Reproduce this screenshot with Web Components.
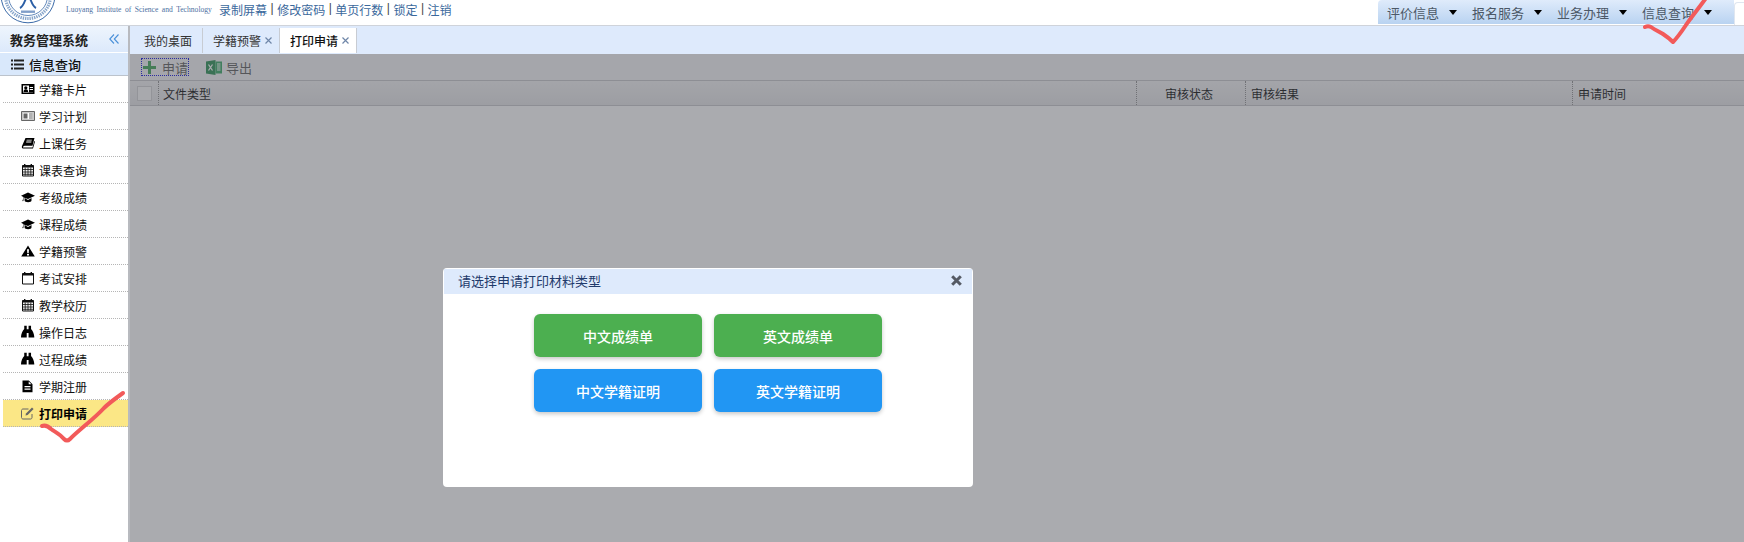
<!DOCTYPE html>
<html lang="zh">
<head>
<meta charset="utf-8">
<title>教务管理系统</title>
<style>
  html, body { margin: 0; height: 100%; overflow: hidden; background: #fff; }
  body { font: 12px "Liberation Sans", "Noto Sans CJK SC", sans-serif; color: #111; }
</style>
</head>
<body>
<edu-app>
  <top-bar slot="top">
    <top-link slot="links">录制屏幕</top-link>
    <top-link slot="links">修改密码</top-link>
    <top-link slot="links">单页行数</top-link>
    <top-link slot="links">锁定</top-link>
    <top-link slot="links">注销</top-link>
    <menu-tab slot="menu">评价信息</menu-tab>
    <menu-tab slot="menu">报名服务</menu-tab>
    <menu-tab slot="menu">业务办理</menu-tab>
    <menu-tab slot="menu">信息查询</menu-tab>
  </top-bar>
  <side-nav slot="side">
    <nav-item icon="card">学籍卡片</nav-item>
    <nav-item icon="news">学习计划</nav-item>
    <nav-item icon="book">上课任务</nav-item>
    <nav-item icon="grid">课表查询</nav-item>
    <nav-item icon="cap">考级成绩</nav-item>
    <nav-item icon="cap">课程成绩</nav-item>
    <nav-item icon="warn">学籍预警</nav-item>
    <nav-item icon="cal">考试安排</nav-item>
    <nav-item icon="grid">教学校历</nav-item>
    <nav-item icon="bino">操作日志</nav-item>
    <nav-item icon="bino">过程成绩</nav-item>
    <nav-item icon="file">学期注册</nav-item>
    <nav-item icon="edit" active>打印申请</nav-item>
  </side-nav>
  <tab-bar slot="tabs">
    <tab-item>我的桌面</tab-item>
    <tab-item closable>学籍预警</tab-item>
    <tab-item closable active>打印申请</tab-item>
  </tab-bar>
  <apply-panel slot="panel"></apply-panel>
  <modal-dialog slot="modal" heading="请选择申请打印材料类型">
    <action-button color="#4caf50">中文成绩单</action-button>
    <action-button color="#4caf50">英文成绩单</action-button>
    <action-button color="#2196f3">中文学籍证明</action-button>
    <action-button color="#2196f3">英文学籍证明</action-button>
  </modal-dialog>
</edu-app>

<script>
(() => {
  const define = (name, html, extra = {}) => {
    customElements.define(name, class extends HTMLElement {
      constructor() {
        super();
        this.attachShadow({ mode: 'open' });
        this.shadowRoot.innerHTML = html;
      }
      connectedCallback() {
        if (extra.ready) extra.ready.call(this);
      }
    });
  };

  const GRID_LINES = '<path fill="none" stroke="#111" stroke-width=".8" d="M1.400 6.500h11.200M1.400 9h11.200M1.400 11.300h11.200M4.200 4.500v8M7 4.500v8M9.800 4.500v8"/>';
  const ICONS = {
    card: '<path fill="#000" d="M.5 2h13v10H.5z"/><path fill="#fff" d="M2 3.500h10v7H2z"/><circle cx="4.800" cy="5.800" r="1.600" fill="#000"/><path fill="#000" d="M2.500 10c0-2 1-2.700 2.300-2.700S7.200 8 7.200 10zM8 3h4.500v7.500H8z"/><path fill="#fff" d="M8.700 5H12v1H8.700zM8.700 7H12v1H8.700z"/>',
    news: '<path fill="#c9c9c9" stroke="#666" d="M.5 2.500h13v9H.5z"/><path fill="#fff" d="M2 4h10v6H2z"/><path fill="#666" d="M2.500 4.500h4v5h-4zM8 4.500h3.800v1H8zM8 6.500h3.800v1H8zM8 8.500h3.800v1H8z"/>',
    book: '<path fill="#000" d="M4.500 2h9l-2 7.800H3.500L2.200 10.400c-.5 1 .1 1.100.9 1.100h8.400l1.800-6.500.7.400-2 7.100H2.600C1.300 12.500.5 11.600.9 10.200z"/><path fill="#fff" d="M5.700 3.800l-.2.800h5.200l.2-.8zM5.300 5.600l-.2.800h5.200l.2-.8z"/>',
    grid: '<path fill="#111" d="M3 1h1.400v2H3zM9.600 1H11v2H9.600z"/><path fill="#f4f4f4" stroke="#111" d="M1.500 2.500h11v10.500h-11z"/><path fill="#111" d="M1.500 2.500h11v2h-11z"/>' + GRID_LINES,
    cal: '<path fill="#111" d="M3 1h1.400v2H3zM9.600 1H11v2H9.600z"/><path fill="#fff" stroke="#111" d="M1.500 2.500h11v10.500h-11z"/><path fill="#111" d="M1.500 2.500h11v2h-11z"/>',
    cap: '<path fill="#000" d="M7 2.500L0 5.800l2.400 1.100-.5 2.900-.5.300.3 1.200.7-.2.200-3.700L7 9l7-3.200zM3.600 8.100v2.500c0 1 1.600 1.600 3.500 1.600s3.400-.6 3.400-1.600V8.100L7 9.900z"/>',
    warn: '<path fill="#000" fill-rule="evenodd" d="M7 1.500l6.800 11H.2zM6 5.200l.3 4h1.400l.3-4zm0 4.800v1.500h2V10z"/>',
    bino: '<g transform="translate(0 -.6) scale(1.080)"><path fill="#000" d="M3 1.200h2.300v11H.3c-.3 0-.3-.4-.3-.6C.1 8.800 1.400 6 3 4.300zM7 1.200h2.300v3.100c1.600 1.700 2.900 4.500 3 7.300 0 .2 0 .6-.3.600H7zM5.300 4.500h1.700v3.500H5.300z"/></g>',
    file: '<path fill="#000" fill-rule="evenodd" d="M1.500 1.500h6.300l3.700 3.700v8h-10zM3.500 7v1.200h6V7zM3.500 9.500v1.200h6V9.500zM7.700 2.600V5.300h2.700z"/>',
    edit: '<path fill="none" stroke="#666" d="M11 8v3.500c0 .8-.6 1.500-1.400 1.500H2c-.8 0-1.500-.7-1.500-1.500V4.500C.5 3.700 1.200 3 2 3h5.500"/><path fill="#666" d="M5 7.500L11 1.500l1.600 1.600-6 6-2.100.5z"/>'
  };

  define('edu-app', `
    <style>
      :host { display: flex; flex-direction: column; width: 1744px; height: 542px; position: relative; overflow: hidden; }
      .body { flex: 1; display: flex; min-height: 0; }
      .main { flex: 1; display: flex; flex-direction: column; position: relative; min-width: 0; }
      .shade { position: absolute; left: 0; right: 0; top: 28px; bottom: 0; background: rgba(85, 87, 95, .5); }
      .marks { position: absolute; left: 0; top: 0; width: 1744px; height: 542px; pointer-events: none; }
      .marks path { fill: none; stroke: #f25a5a; stroke-width: 4; stroke-linecap: round; stroke-linejoin: round; }
    </style>
    <slot name="top"></slot>
    <div class="body">
      <slot name="side"></slot>
      <div class="main">
        <slot name="tabs"></slot>
        <slot name="panel"></slot>
        <div class="shade"></div>
        <slot name="modal"></slot>
      </div>
    </div>
    <svg class="marks" viewBox="0 0 1744 542">
      <path d="M42 426c3-1 6 0 9 3 4 3 9 5 13 10 2 2 4 2 6 0 10-10 24-20 34-31 5-5 12-10 19-15"/>
      <path d="M1645 27c2-1 4-1 6 0 4 3 9 5 12 7 3 2 7 5 10 8 5-5 9-11 13-17 6-9 13-17 20-27"/>
    </svg>
  `);

  define('top-bar', `
    <style>
      :host { display: flex; height: 26px; box-sizing: border-box; flex: none; border-bottom: 1px solid #cfd3da; background: #fff; overflow: hidden; }
      svg { flex: none; width: 58px; height: 25px; }
      .school { flex: none; margin: 4px 0 0 8px; width: 153px; font: 7.600px/12px "Liberation Serif", serif; word-spacing: 1.600px; color: #4d6f9f; white-space: nowrap; }
      .links { flex: none; display: flex; height: 18px; align-items: center; white-space: nowrap; }
      .gap { flex: 1; }
      .menu { flex: none; display: flex; width: 356px; height: 24px; box-sizing: border-box; border-radius: 4px 0 0 0; background: linear-gradient(#dfebfb, #b9d3f1); }
      .end { flex: none; width: 10px; height: 23px; margin-top: 2px; background: #fff; border: 1px solid #dfe6f0; border-bottom: 0; border-right: 0; border-radius: 4px 0 0 0; box-sizing: border-box; }
    </style>
    <svg viewBox="0 0 58 25">
      <g fill="none" stroke="#3a6aa8">
        <circle cx="28" cy="-4" r="26.800" stroke-width="1"/>
        <circle cx="28" cy="-4" r="22.500" stroke-width="3.200" stroke-dasharray="1.400 .9" opacity=".6"/>
        <circle cx="28" cy="-4" r="19.500" stroke-width=".8"/>
        <path d="M20 8c4-2 7-12 8-18 1 6 4 16 8 18" stroke-width="2" stroke="#2b5ea5"/>
      </g>
      <path d="M21 10.500h14v2.400H21z" fill="#2b5ea5" opacity=".6"/>
    </svg>
    <div class="school">Luoyang Institute of Science and Technology</div>
    <div class="links"><slot name="links"></slot></div>
    <div class="gap"></div>
    <div class="menu"><slot name="menu"></slot></div>
    <div class="end"></div>
  `);

  define('top-link', `
    <style>
      :host { display: inline-flex; color: #3a689c; }
      :host(:not(:first-child))::before { content: "|"; margin: 0 3.500px; color: #444; }
    </style>
    <slot></slot>
  `);

  define('menu-tab', `
    <style>
      :host { display: flex; align-items: center; width: 85px; padding: 0 0 0 9px; box-sizing: border-box; font-size: 13px; color: #4c5866; white-space: nowrap; height: 24px; }
      i { width: 0; height: 0; margin-left: 10px; border: 4px solid transparent; border-top: 5px solid #000; border-bottom: 0; }
    </style>
    <slot></slot><i></i>
  `);

  define('side-nav', `
    <style>
      :host { display: block; flex: none; width: 128px; border-right: 2px solid #b8babf; background: #fff; }
      .title { display: flex; align-items: center; justify-content: space-between; height: 26px; padding: 0 9px 0 10px; background: linear-gradient(#eef5fd, #dce9fb); font-size: 13px; font-weight: bold; color: #222; }
      .title svg { width: 10px; height: 10px; }
      .group { display: flex; align-items: center; gap: 5px; height: 22px; margin-top: 1px; padding-left: 11px; background: #d9e8fb; border-bottom: 1px solid #bcc3cc; font-size: 13px; font-weight: 500; color: #111; }
      .group svg { width: 13px; height: 11px; }
      .items { display: flex; flex-direction: column; }
    </style>
    <div class="title">
      <span>教务管理系统</span>
      <svg viewBox="0 0 10 10" fill="none" stroke="#4a90d9" stroke-width="1.100"><path d="M5 .5L.8 5 5 9.500M9.500 .5L5.300 5l4.200 4.500"/></svg>
    </div>
    <div class="group">
      <svg viewBox="0 0 13 11" fill="#222"><path d="M0 .5h2v2H0zM3 .5h10v2H3zM0 4.500h2v2H0zM3 4.500h10v2H3zM0 8.500h2v2H0zM3 8.500h10v2H3z"/></svg>
      <span>信息查询</span>
    </div>
    <div class="items"><slot></slot></div>
  `);

  define('nav-item', `
    <style>
      :host { display: flex; align-items: center; height: 27px; margin-left: 3px; box-sizing: border-box; padding-left: 18px; border-bottom: 1px dotted #b5b5b5; color: #111; font-size: 12px; }
      :host([active]) { background: #fbe786; color: #000; font-weight: bold; }
      svg { width: 14px; height: 14px; margin-right: 4px; flex: none; }
    </style>
    <svg viewBox="0 0 14 14"></svg><slot></slot>
  `, {
    ready() {
      this.shadowRoot.querySelector('svg').innerHTML = ICONS[this.getAttribute('icon')] || '';
    }
  });

  define('tab-bar', `
    <style>
      :host { display: flex; align-items: flex-end; flex: none; height: 28px; padding: 0 0 1px 4px; box-sizing: border-box; background: #deeafc; }
    </style>
    <slot></slot>
  `);

  define('tab-item', `
    <style>
      :host { display: flex; align-items: center; height: 25px; padding: 0 10px; border-right: 1px solid #c8ccd3; color: #333; font-size: 12px; white-space: nowrap; }
      :host([active]) { background: #fff; color: #111; font-weight: 500; }
      .x { display: none; margin-left: 4px; width: 7px; height: 7px; }
      :host([closable]) .x { display: block; }
      :host([closable]) { padding-right: 7px; }
    </style>
    <slot></slot>
    <svg class="x" viewBox="0 0 7 7" stroke="#6f86a8" stroke-width="1.200"><path d="M.5 .5l6 6M6.500 .5l-6 6"/></svg>
  `);

  define('apply-panel', `
    <style>
      :host { display: flex; flex-direction: column; flex: 1; background: #fff; min-height: 0; }
      .tools { display: flex; align-items: center; height: 26px; flex: none; padding-left: 11px; background: #f5f5f6; color: #555; font-size: 13px; }
      .btn { display: flex; align-items: center; height: 18px; gap: 6px; }
      .btn.add { width: 48px; box-sizing: border-box; padding-left: 2px; outline: 1px dotted #0000e0; outline-offset: -1px; margin-right: 17px; }
      .btn svg { flex: none; }
      .head { display: grid; grid-template-columns: 28px 978px 109px 327px 1fr; height: 26px; flex: none; box-sizing: border-box; border-top: 1px solid #c4c4c8; border-bottom: 1px solid #c4c4c8; background: linear-gradient(#f2f2f3, #e4e4e6); color: #000; font-size: 12px; }
      .head > div { display: flex; align-items: center; padding-left: 5px; border-left: 1px dotted #8a8a8a; }
      .head > div:first-child { border-left: 0; padding-left: 7px; }
      .head > div.type { padding-left: 4px; }
      .head > div.mid { justify-content: center; padding: 0 4px 0 0; }
      .check { width: 15px; height: 15px; box-sizing: border-box; border: 1px solid #d0d0d2; background: #fafafa; }
    </style>
    <div class="tools">
      <div class="btn add">
        <svg width="13" height="13" viewBox="0 0 13 13" fill="#36a04e"><path d="M5 0h3v5h5v3H8v5H5V8H0V5h5z"/></svg>
        <span>申请</span>
      </div>
      <div class="btn" style="gap:4px">
        <svg width="16" height="15" viewBox="0 0 16 15"><path fill="#1f8a4a" d="M0 1.500L9.500 0v15L0 13.500z"/><path fill="#2da55c" d="M9.500 1.500H16v12H9.500z"/><path fill="#fff" d="M11 3.500h3.500v1H11zM11 5.500h3.500v1H11zM11 7.500h3.500v1H11zM11 9.500h3.500v1H11z"/><path fill="none" stroke="#fff" stroke-width="1.300" d="M2.500 4.500l4 6M6.500 4.500l-4 6"/></svg>
        <span>导出</span>
      </div>
    </div>
    <div class="head">
      <div><span class="check"></span></div>
      <div class="type">文件类型</div>
      <div class="mid">审核状态</div>
      <div>审核结果</div>
      <div>申请时间</div>
    </div>
  `);

  define('modal-dialog', `
    <style>
      :host { display: block; position: absolute; left: 313px; top: 242px; width: 530px; height: 219px; box-sizing: border-box; background: #fff; border-radius: 4px; padding: 1px; overflow: hidden; }
      .bar { display: flex; align-items: center; justify-content: space-between; height: 25px; padding: 0 10px 2px 14px; box-sizing: border-box; background: #deeafc; font-size: 13px; color: #1f3a6b; }
      .bar svg { width: 11px; height: 11px; }
      .btns { display: grid; grid-template-columns: 168px 168px; gap: 12px; justify-content: center; margin-top: 20px; }
    </style>
    <div class="bar">
      <span></span>
      <svg viewBox="0 0 11 11" stroke="#555a64" stroke-width="3"><path d="M1.200 1.200l8.600 8.600M9.800 1.200l-8.600 8.600"/></svg>
    </div>
    <div class="btns"><slot></slot></div>
  `, {
    ready() {
      this.shadowRoot.querySelector('.bar span').textContent = this.getAttribute('heading');
    }
  });

  define('action-button', `
    <style>
      :host { display: flex; align-items: center; justify-content: center; height: 43px; border-radius: 6px; color: #fff; font-size: 14px; font-weight: 500; box-shadow: 0 2px 4px rgba(0, 0, 0, .22); }
    </style>
    <slot></slot>
  `, {
    ready() {
      this.style.background = this.getAttribute('color');
    }
  });
})();
</script>
</body>
</html>
